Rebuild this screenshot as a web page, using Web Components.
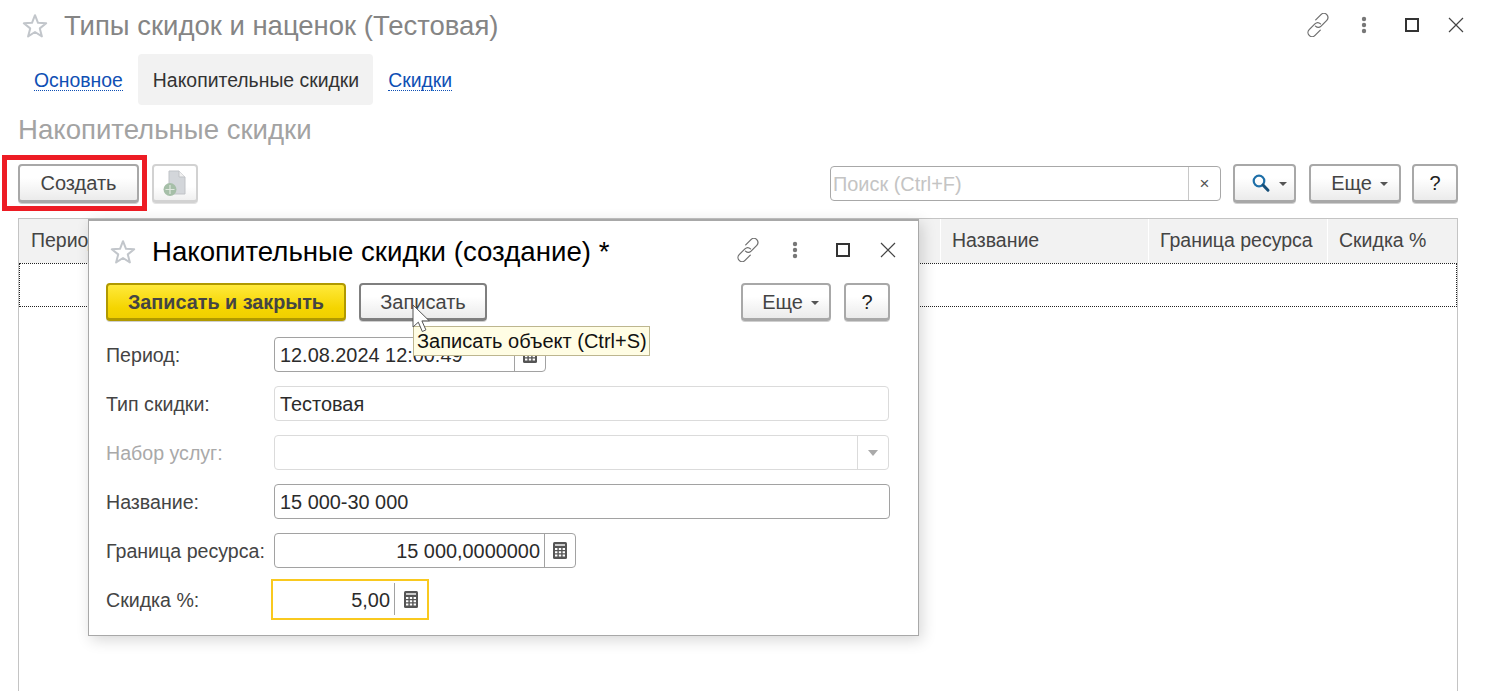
<!DOCTYPE html>
<html lang="ru"><head><meta charset="utf-8"><title>Типы скидок и наценок</title>
<style>
html,body{margin:0;padding:0;height:691px;overflow:hidden;background:#fff}
body{font:19.800px "Liberation Sans",Arial,sans-serif;color:#333}
</style></head><body>
<app-page></app-page>
<script>
const define=(name,css,html)=>{customElements.define(name,class extends HTMLElement{
  constructor(){super();this.attachShadow({mode:'open'})}
  connectedCallback(){const a=n=>this.getAttribute(n)||'';
    this.shadowRoot.innerHTML='<style>'+css+'</style>'+(typeof html==='function'?html(a,this):html)}
})};
const icons={
 star:'<svg width="28" height="28" viewBox="0 0 28 28"><path d="M14 3.2l3 7.6 8.2.5-6.4 5.1 2.1 8-6.900-4.400-6.900 4.400 2.100-8-6.400-5.100 8.200-.5z" fill="#fff" stroke="#c2c6cb" stroke-width="2" stroke-linejoin="round"/></svg>',
 link:'<svg width="24" height="24" viewBox="3.500 2.500 19 21" fill="none" stroke="#6e6e6e" stroke-width="1.100" stroke-linecap="round"><path d="M11 8.500l4.600-4.600a3.600 3.600 0 0 1 5.100 5.100l-5 5a3.600 3.600 0 0 1-4.900 0"/><path d="M15 17.500l-4.600 4.600a3.600 3.600 0 0 1-5.100-5.100l5-5a3.600 3.600 0 0 1 4.900 0"/></svg>',
 dots:'<svg width="6" height="18" viewBox="0 0 6 18" fill="#777"><circle cx="3" cy="3" r="2.200"/><circle cx="3" cy="9" r="2.200"/><circle cx="3" cy="15" r="2.200"/></svg>',
 max:'<svg width="14" height="14" viewBox="0 0 14 14"><rect x="1" y="1" width="12" height="12" fill="none" stroke="#333" stroke-width="2"/></svg>',
 close:'<svg width="16" height="16" viewBox="0 0 16 16"><path d="M1 1l14 14M15 1L1 15" stroke="#444" stroke-width="1.200" fill="none"/></svg>',
 search:'<svg width="20" height="20" viewBox="0 0 20 20" fill="none"><circle cx="8" cy="8" r="5.300" stroke="#1e6fa8" stroke-width="2.200"/><path d="M12 12l5 5.200" stroke="#174f78" stroke-width="3" stroke-linecap="round"/></svg>',
 calc:'<svg width="14" height="17" viewBox="0 0 14 17"><rect width="14" height="17" rx="1.500" fill="#555"/><rect x="2" y="2" width="10" height="2" fill="#ccc"/><path d="M2 6h2.400v2H2zM5.800 6h2.400v2H5.800zM9.600 6H12v2H9.600zM2 9.200h2.400v2H2zM5.800 9.200h2.400v2H5.800zM9.600 9.200H12v2H9.600zM2 12.400h2.400v2H2zM5.800 12.400h2.400v2H5.800zM9.600 12.400H12v2H9.600z" fill="#fff"/></svg>',
 newdoc:'<svg width="30" height="30" viewBox="0 0 30 30"><path d="M9 3h10l6 6v17H9z" fill="#d3d6da" stroke="#c0c3c7"/><path d="M19 3v6h6" fill="#f0f0f0" stroke="#c0c3c7"/><circle cx="10" cy="21.500" r="6.500" fill="#a6bfa8"/><path d="M10 17v9M5.500 21.500h9" stroke="#dfe8df" stroke-width="1.200"/></svg>',
 cursor:'<svg width="20" height="29" viewBox="0 0 20 29"><path d="M1 1v22l5.300-4.800 4 9.300 3.600-1.600-4-9h7.400z" fill="#fff" stroke="#555" stroke-width="1" stroke-linejoin="round"/></svg>'
};

define('ui-icon',':host{display:inline-flex;align-items:center;justify-content:center;line-height:0}',a=>icons[a('name')]||'');

define('ui-button',`
 :host{display:inline-flex;box-sizing:border-box;height:38px;margin-bottom:1px;align-items:center;justify-content:center;gap:8px;
  border:2px solid #a8a8a8;border-bottom-width:3px;border-radius:4px;background:linear-gradient(#fff 35%,#ebebeb);
  box-shadow:0 1px 0 #cfcfcf;color:#444;font-size:20px;white-space:nowrap}
 :host([menu]){padding-left:9px}
 :host([dark]){color:#222}
 :host([kind=default]){border-color:#b09900;background:linear-gradient(#ffe93b,#f5d500 70%,#f0cf00);font-weight:700;color:#444;font-size:19.800px;padding-top:1px}
 :host([kind=hover]){border-color:#7f7f7f;padding-top:1px}
 :host([kind=small]){padding-top:1px}
 :host([disabled]){border-color:#d2d2d2;background:linear-gradient(#fff 60%,#f0f0f0);box-shadow:0 1px 0 #e2e2e2}
 i{width:0;height:0;border:4px solid transparent;border-top:4px solid #555;border-bottom:0;margin-top:2px}
`,(a)=>`<slot></slot>${a('menu')==='1'?'<i></i>':''}`);

define('ui-field',`
 :host{display:flex;box-sizing:border-box;height:35px;border:1px solid #a2a2a2;border-radius:4px;background:#fff;align-items:stretch;font-size:19.900px;color:#2b2b2b}
 :host([soft]){border-color:#dbdbdb}
 :host([focused]){border:0;outline:2px solid #f9c91f;outline-offset:1px;border-radius:0}
 .v{flex:1;min-width:0;padding:0 5px;line-height:34px;white-space:nowrap;overflow:hidden}
 :host([focused]) .v{line-height:36px;padding-right:4px}
 :host([right]) .v{text-align:right;padding-right:4px}
 .b{width:30px;border-left:1px solid #a2a2a2;display:flex;align-items:center;justify-content:center}
 :host([focused]) .b{margin:1px 0 2px;width:31px}
 :host([soft]) .b{border-color:#dbdbdb}
 .t{width:0;height:0;border:5px solid transparent;border-top:6px solid #aaa;border-bottom:0}
`,a=>`<div class="v"><slot></slot></div>${a('btn')==='calc'?'<div class="b"><ui-icon name="calc"></ui-icon></div>':a('btn')==='down'?'<div class="b"><span class="t"></span></div>':''}`);

define('ui-form-row',`
 :host{display:grid;grid-template-columns:168px 1fr;align-items:center;height:35px}
 .l{color:#444;font-size:19.600px;white-space:nowrap;padding-top:1px}
 :host([off]) .l{color:#a9a9a9}
 .f{display:block}
`,a=>`<span class="l">${a('label')}</span><div class="f"><slot></slot></div>`);

define('ui-tab',`
 :host{display:flex;align-items:center;padding:1px 15px 0;box-sizing:border-box;height:51px;font-size:19.400px;border-radius:4px;white-space:nowrap}
 :host([active]){background:#f2f2f2;color:#333;padding:1px 14px 0 15px}
 a{color:#0f4fb4;text-decoration:none;border-bottom:1px dotted #0f4fb4;line-height:20px}
`,(a,e)=>e.hasAttribute('active')?'<slot></slot>':'<a><slot></slot></a>');

define('ui-window-icons',`
 :host{display:grid;align-items:center;justify-items:center;grid-template-columns:repeat(4,auto)}
`,()=>`<ui-icon name="link"></ui-icon><ui-icon name="dots" style="margin-left:var(--g1)"></ui-icon><ui-icon name="max" style="margin-left:var(--g2)"></ui-icon><ui-icon name="close" style="margin-left:var(--g3)"></ui-icon>`);

define('ui-tooltip',`
 :host{position:absolute;left:324px;top:105px;box-sizing:border-box;height:30px;width:237px;background:#fffde4;border:1px solid #bdb68f;
  font-size:20px;line-height:28px;padding-left:3px;color:#111;white-space:nowrap}
`,'<slot></slot>');

define('ui-dialog',`
 :host{position:absolute;left:88px;top:219px;width:831px;height:417px;box-sizing:border-box;background:#fff;
  border:1px solid #a8a8a8;border-top:2px solid #a8a8a8;box-shadow:3px 4px 14px rgba(0,0,0,.16);z-index:2}
 header{display:flex;align-items:center;height:62px;padding-left:20px;--g1:32px;--g2:38px;--g3:30px}
 h2{margin:0 0 0 15px;font:400 27.650px "Liberation Sans",Arial,sans-serif;color:#000;flex:1;white-space:nowrap}
 ui-window-icons{margin-right:22px;margin-top:-5px}
 .bar{display:flex;padding-left:17px;height:38px}
 .bar ui-button:nth-child(1){width:240px}
 .bar ui-button:nth-child(2){width:128px;margin-left:13px}
 .bar ui-button:nth-child(3){width:90px;margin-left:auto}
 .bar ui-button:nth-child(4){width:46px;margin-left:13px;margin-right:28px}
 form{display:grid;row-gap:14px;padding:16px 0 0 17px}
`,()=>`<header><ui-icon name="star"></ui-icon><h2>Накопительные скидки (создание) *</h2><ui-window-icons></ui-window-icons></header>
 <div class="bar"><ui-button kind="default">Записать и закрыть</ui-button><ui-button kind="hover">Записать</ui-button><ui-button kind="small" menu="1">Еще</ui-button><ui-button kind="small" dark>?</ui-button></div>
 <form>
  <ui-form-row label="Период:"><ui-field btn="calc" style="width:272px">12.08.2024 12:00:49</ui-field></ui-form-row>
  <ui-form-row label="Тип скидки:"><ui-field soft style="width:615px">Тестовая</ui-field></ui-form-row>
  <ui-form-row label="Набор услуг:" off><ui-field soft btn="down" style="width:615px"></ui-field></ui-form-row>
  <ui-form-row label="Название:"><ui-field style="width:616px">15 000-30 000</ui-field></ui-form-row>
  <ui-form-row label="Граница ресурса:"><ui-field right btn="calc" style="width:302px">15 000,0000000</ui-field></ui-form-row>
  <ui-form-row label="Скидка %:"><ui-field right focused btn="calc" style="width:152px">5,00</ui-field></ui-form-row>
 </form>
 <ui-tooltip>Записать объект (Ctrl+S)</ui-tooltip>
 <ui-icon name="cursor" style="position:absolute;left:323px;top:83px"></ui-icon>`);

define('ui-table',`
 :host{display:block;flex:1;margin:15px 27px 0 18px;border:1px solid #c4c4c4;border-bottom:0;min-height:0}
 .head{display:grid;grid-template-columns:1fr 208px 179px 130px;height:44px;background:#f2f2f2}
 .head span{display:flex;align-items:center;padding:0 0 2px 11px;font-size:19.500px;color:#444;border-left:1px solid #fff;white-space:nowrap}
 .head span:first-child{border-left:0;padding-left:12px}
 .row{height:42px;border:1px dotted #222}
`,()=>`<div class="head"><span>Период</span><span>Название</span><span>Граница ресурса</span><span>Скидка %</span></div><div class="row"></div>`);

define('ui-search',`
 :host{display:flex;box-sizing:border-box;width:391px;height:35px;border:1px solid #a8a8a8;border-radius:4px;background:#fff;font-size:19.900px}
 .v{flex:1;padding-left:2px;line-height:34px;color:#c4c4c4;white-space:nowrap}
 .x{width:31px;border-left:1px solid #c8c8c8;display:flex;align-items:center;justify-content:center;color:#555;font-size:17px}
`,()=>`<div class="v">Поиск (Ctrl+F)</div><div class="x">×</div>`);

define('app-page',`
 :host{display:flex;flex-direction:column;height:691px;overflow:hidden;position:relative}
 .title{display:flex;align-items:center;height:54px;padding:0 21px 2px 21px;box-sizing:border-box;--g1:31px;--g2:38px;--g3:29px}
 h1{margin:0 0 0 15px;font:400 27.500px "Liberation Sans",Arial,sans-serif;color:#858585;flex:1;white-space:nowrap}
 .title ui-window-icons{margin-top:-3px}
 nav{display:flex;padding-left:19px}
 h3{margin:0;padding-left:18px;height:50px;font:400 27.600px/50px "Liberation Sans",Arial,sans-serif;color:#a3a3a3;white-space:nowrap}
 .tools{display:flex;align-items:center;margin-top:9px;padding-left:18px;height:39px}
 .mark{position:relative;display:flex}
 .mark::after{content:"";position:absolute;left:-16px;top:-9px;right:-8px;bottom:-8px;border:5px solid #ed1c24}
 .mark ui-button{margin-bottom:0;height:39px}
 .tools ui-button{height:39px;margin-bottom:0}
 .tools ui-button.create{width:121px}
 .tools ui-button.add{width:46px;margin-left:13px}
 ui-search{margin-left:auto;margin-right:12px}
 .s{width:63px}.m{width:92px;margin-left:13px}.h{width:46px;margin:0 27px 0 11px}
`,()=>`<div class="title"><ui-icon name="star"></ui-icon><h1>Типы скидок и наценок (Тестовая)</h1><ui-window-icons></ui-window-icons></div>
 <nav><ui-tab>Основное</ui-tab><ui-tab active>Накопительные скидки</ui-tab><ui-tab>Скидки</ui-tab></nav>
 <h3>Накопительные скидки</h3>
 <div class="tools"><span class="mark"><ui-button class="create">Создать</ui-button></span><ui-button class="add" disabled><ui-icon name="newdoc"></ui-icon></ui-button>
  <ui-search></ui-search><ui-button class="s" menu="1"><ui-icon name="search"></ui-icon></ui-button><ui-button class="m" menu="1">Еще</ui-button><ui-button class="h" dark>?</ui-button></div>
 <ui-table></ui-table>
 <ui-dialog></ui-dialog>`);
</script>
</body></html>
